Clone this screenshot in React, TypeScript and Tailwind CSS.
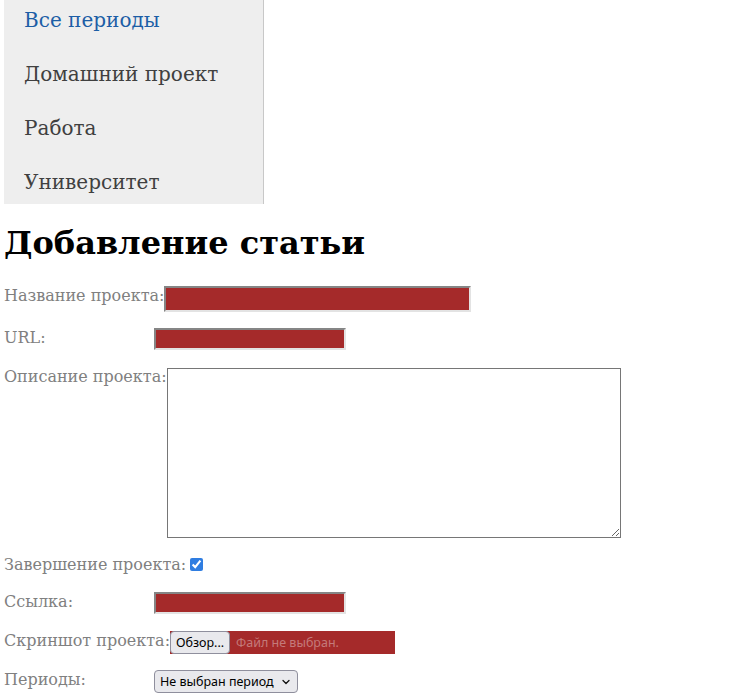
import React from "react";

const serif = { fontFamily: '"DejaVu Serif", serif' };

const textInput =
  "block bg-[#a52a2a] border-2 border-t-[#858585] border-l-[#858585] border-r-[#e3e3e3] border-b-[#e3e3e3] outline-none";

function Label({ children, className = "" }: { children: React.ReactNode; className?: string }) {
  return (
    <label className={`min-w-[150px] shrink-0 text-[16px] leading-[19px] text-[#808080] whitespace-nowrap ${className}`}>
      {children}
    </label>
  );
}

export default function App() {
  const periods = ["Все периоды", "Домашний проект", "Работа", "Университет"];
  return (
    <div className="min-h-[694px] w-[754px] bg-white px-[4px]" style={serif}>
      <nav className="w-[260px] h-[204px] overflow-hidden bg-[#eeeeee] border-r border-[#c8c8c8]">
        <ul className="flex flex-col">
          {periods.map((p, i) => (
            <li
              key={p}
              className={`pl-[20px] text-[20px] leading-[24px] ${i === 0 ? "pt-[8px] pb-[15px] text-[#1c5ea6]" : "py-[15px] text-[#404040]"}`}
            >
              {p}
            </li>
          ))}
        </ul>
      </nav>

      <h1 className="mt-[21px] mb-[21px] text-[32px] leading-[37px] font-bold text-black">Добавление статьи</h1>

      <form className="flex flex-col">
        <div className="mt-[3px] flex items-start">
          <Label>Название проекта:</Label>
          <input type="text" className={`${textInput} w-[307px] h-[26px]`} />
        </div>

        <div className="mt-[16px] flex items-start">
          <Label>URL:</Label>
          <input type="text" className={`${textInput} w-[192px] h-[22px]`} />
        </div>

        <div className="mt-[18px] flex items-start">
          <Label className="-mt-[1px]">Описание проекта:</Label>
          <textarea className="block w-[454px] h-[170px] border border-[#767676] bg-white outline-none" />
        </div>

        <div className="mt-[17px] flex items-center h-[19px]">
          <label className="text-[16px] leading-[19px] text-[#808080] whitespace-nowrap">Завершение проекта:</label>
          <input type="checkbox" defaultChecked className="ml-[4px] w-[13px] h-[13px] accent-[#2f7de1]" />
        </div>

        <div className="mt-[18px] flex items-start">
          <Label>Ссылка:</Label>
          <input type="text" className={`${textInput} w-[192px] h-[22px]`} />
        </div>

        <div className="mt-[17px] flex items-start">
          <Label>Скриншот проекта:</Label>
          <div
            className="flex items-center w-[225px] h-[23px] bg-[#a52a2a]"
            style={{ fontFamily: '"Noto Sans", sans-serif' }}
          >
            <button
              type="button"
              className="h-[23px] w-[60px] bg-[#e9e9ed] border border-[#8f8f9d] rounded-[4px] text-[12.5px] leading-[16px] text-black"
            >
              Обзор...
            </button>
            <span className="ml-[6px] text-[12.5px] leading-[16px] text-[#c47a7a]">Файл не выбран.</span>
          </div>
        </div>

        <div className="mt-[16px] flex items-start">
          <Label>Периоды:</Label>
          <div
            className="relative flex items-center w-[144px] h-[23px] bg-[#e9e9ed] border border-[#8f8f9d] rounded-[4px]"
            style={{ fontFamily: '"Noto Sans", sans-serif' }}
          >
            <select className="appearance-none w-full h-full bg-transparent pl-[5px] pr-[16px] text-[12.5px] leading-[16px] text-black outline-none">
              <option>Не выбран период</option>
            </select>
            <svg
              className="pointer-events-none absolute right-[7px] top-[8px]"
              width="8"
              height="6"
              viewBox="0 0 8 6"
              fill="none"
            >
              <path d="M1 1.5l3 3 3-3" stroke="#111" strokeWidth="1.3" strokeLinecap="round" strokeLinejoin="round" />
            </svg>
          </div>
        </div>
      </form>
    </div>
  );
}
